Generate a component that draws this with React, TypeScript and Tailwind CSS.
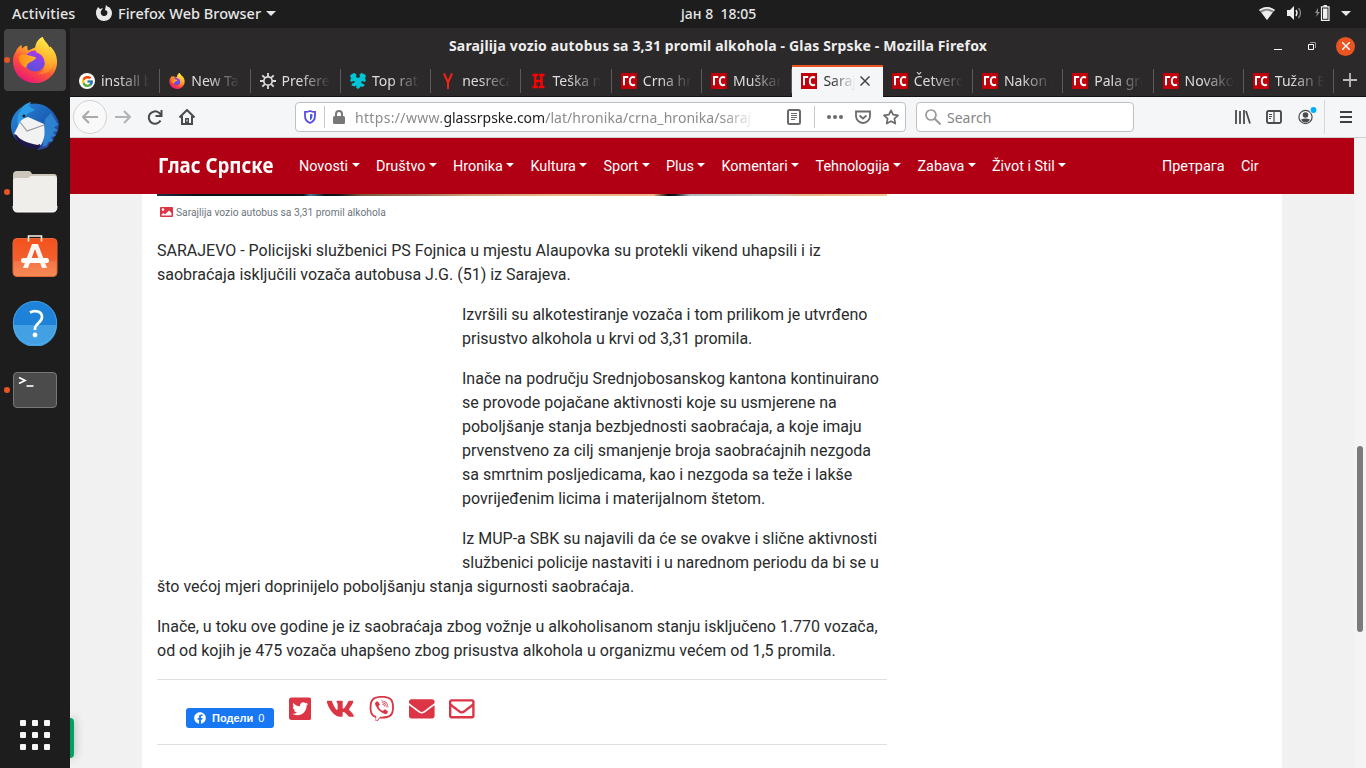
import React from "react";
import { FcGoogle } from "react-icons/fc";
import { FaTwitterSquare, FaVk, FaViber, FaEnvelope, FaRegEnvelope, FaFacebook } from "react-icons/fa";

const Firefox = ({ id, className }: { id: string; className: string }) => (
  <svg viewBox="0 0 48 48" className={className}>
    <defs>
      <linearGradient id={id + "a"} x1=".8" y1="0" x2=".25" y2="1">
        <stop offset="0" stopColor="#fff44f" />
        <stop offset=".35" stopColor="#ffb02e" />
        <stop offset=".62" stopColor="#ff5634" />
        <stop offset="1" stopColor="#e8117f" />
      </linearGradient>
      <linearGradient id={id + "b"} x1=".7" y1="0" x2=".3" y2="1">
        <stop offset="0" stopColor="#b833e1" />
        <stop offset=".5" stopColor="#7a48e8" />
        <stop offset="1" stopColor="#5b4fd8" />
      </linearGradient>
      <linearGradient id={id + "c"} x1="0" y1="0" x2="1" y2="0">
        <stop offset="0" stopColor="#ff8a16" />
        <stop offset="1" stopColor="#ffb52b" />
      </linearGradient>
      <linearGradient id={id + "d"} x1=".6" y1="0" x2=".4" y2="1">
        <stop offset="0" stopColor="#fff04a" />
        <stop offset=".6" stopColor="#ffb32c" />
        <stop offset="1" stopColor="#ff7a2c" />
      </linearGradient>
    </defs>
    <path d="M4 15c1-3 3-5 6-7 0 2 0 3 1 4 1-2 3-3 5-3 0 2 0 4 1 5l7-3c1-5 3-9 8-11 1 4 5 6 7 11l1-1c5 5 7 10 7 16 0 12-10 22-23 22S1 38 1 25c0-4 1-7 3-10z" fill={`url(#${id}a)`} />
    <circle cx="24" cy="25" r="11" fill={`url(#${id}b)`} />
    <path d="M7 20c3-2 7-2 10-1l8 2c0 2-3 4-6 5-2 1-4 3-4 6-5-2-8-6-8-12z" fill={`url(#${id}c)`} />
    <path d="M25 12c0-5 2-9 7-12 1 4 5 6 7 11l1-1c5 7 6 12 3 19-3 8-10 11-16 9 5-1 8-7 7-12s-3-8-9-10z" fill={`url(#${id}d)`} />
  </svg>
);

const Thunderbird = () => (
  <svg viewBox="0 0 48 48" className="h-12 w-12">
    <defs>
      <linearGradient id="tb" x1="0" y1="0" x2="1" y2="1">
        <stop offset="0" stopColor="#2b8bdc" />
        <stop offset=".5" stopColor="#1b62b8" />
        <stop offset="1" stopColor="#333a93" />
      </linearGradient>
    </defs>
    <path d="M14 3 20 0l-1 2C33-1 45 9 48 22l-1 6-2 5-2 2-1 4-4 3-1 3-5 2-6 1 4-4C13 45 2 40 0 26-1 15 6 7 14 3z" fill="url(#tb)" />
    <path d="M10 8c2-5 6-7 10-8l-2 4 6 4-8 4-2 6-6 8C5 20 6 12 10 8z" fill="#2c9ce6" />
    <path d="m34 17 6-6 7 12-4 2 4 4-5 1 3 4-5 1 2 4-5 1-1 3-4 2z" fill="#2e82cf" />
    <path d="M3 32 9 20c2-3 5-4 8-5l16 7c1 8 1 14-3 21L5 34z" fill="#f2f2f3" />
    <path d="m9 20 7 9 17-6" fill="none" stroke="#999" strokeWidth="1.100" />
    <circle cx="13" cy="14" r="1.600" fill="#222" />
    <path d="m3 32 26 10-2 5C15 46 6 43 3 32z" fill="#20164a" />
    <path d="m5 32 25 9-3 2C16 41 8 38 5 32z" fill="#f2f2f3" />
  </svg>
);

const Files = () => (
  <svg viewBox="0 0 46 42" className="h-[42px] w-[46px]">
    <path d="M1 4q0-4 4-4h12q2 0 3 3h22q3 0 3 4v15H1z" fill="#cdc7bb" />
    <path d="M1 10q0-3 3-3h12l3-2h23q3 0 3 3v28q0 5-4 5H5q-4 0-4-5z" fill="#f0eeea" />
    <path d="M1 35q0 6 4 6h36q4 0 4-6" fill="none" stroke="#fff" />
  </svg>
);

const Software = () => (
  <svg viewBox="0 0 46 44" className="h-[44px] w-[46px]">
    <defs>
      <linearGradient id="sw" x1="0" y1="0" x2="0" y2="1">
        <stop offset="0" stopColor="#f4511c" />
        <stop offset=".58" stopColor="#f2602d" />
        <stop offset=".6" stopColor="#f37445" />
        <stop offset="1" stopColor="#f58b55" />
      </linearGradient>
    </defs>
    <rect x="1" y="4.500" width="44" height="38" rx="4" fill="url(#sw)" stroke="#e5653a" />
    <path d="M16.500 7.500V2h13v5.500" fill="none" stroke="#fff3e5" strokeWidth="1.600" />
    <path d="M20 10h6l9 24h-5L23 15l-7 19h-5z" fill="#fff" opacity=".95" />
    <rect x="9" y="24" width="28" height="5" rx="2.500" fill="#fff" />
  </svg>
);

const Help = () => (
  <svg viewBox="0 0 46 46" className="h-[46px] w-[46px]">
    <circle cx="23" cy="23" r="22" fill="#1e82d8" />
    <path d="M1 25a22 22 0 0 0 44 0z" fill="#42a0e3" />
    <circle cx="23" cy="23" r="21.700" fill="none" stroke="#55b1ee" strokeWidth=".7" />
    <path d="M18 12.500c5-3 12-1 12 4.500 0 6-7 6-7 12v1" fill="none" stroke="#fff" strokeWidth="2.700" />
    <circle cx="23" cy="35" r="2.400" fill="#fff" />
  </svg>
);

const Terminal = () => (
  <svg viewBox="0 0 46 38" className="h-[38px] w-[46px]">
    <rect x="1.500" y="1.500" width="43" height="35" rx="3.500" fill="#4b4b4b" stroke="#777" />
    <path d="m7 6.500 6 3-6 3" fill="none" stroke="#fff" strokeWidth="1.700" />
    <path d="M14.500 15h7" stroke="#fff" strokeWidth="1.600" />
  </svg>
);

const Puzzle = () => (
  <svg viewBox="0 0 16 16" className="h-4 w-4">
    <path d="M0 2.500 2 1l2.500-1 2 1.500L6 4l2 1 2-1-.5-2.500 2-1.500L14 1l2 1.500-1 3 1 2-1.500 1.500-2-1-1.500 1 1 1.500 2 .5.5 2-3 1-1-1-.5 1.500L8 16l-2-1.500.5-1.500-1-.5-1 1-3-1 .5-2 2-.5 1-1.500L3.500 8l-2 1L0 7.500l1-2z" fill="#00c5d6" />
  </svg>
);

const Gear = () => (
  <svg viewBox="0 0 16 16" className="h-4 w-4">
    <circle cx="8" cy="8" r="4.200" fill="none" stroke="#dcdcdc" strokeWidth="1.700" />
    <path d="M8 0v3.500M8 12.500V16M0 8h3.500M12.500 8H16M2.300 2.300l2.600 2.600M11.100 11.100l2.600 2.600M13.700 2.300l-2.600 2.600M4.900 11.100l-2.600 2.600" stroke="#dcdcdc" strokeWidth="1.800" />
  </svg>
);

const Gs = () => (
  <span className="flex h-4 w-4 items-center justify-center bg-[#c2000b]">
    <svg viewBox="0 0 16 16" className="h-4 w-4">
      <path d="M3 12.300V4h4.200M14 4.600c-3-1.500-5.200.2-5.200 3.500s2 5 5.200 3.600" fill="none" stroke="#fff" strokeWidth="2" />
    </svg>
  </span>
);

const tabs: { title: string; icon: React.ReactNode; active?: boolean }[] = [
  { title: "install b", icon: <span className="flex h-4 w-4 items-center justify-center rounded-full bg-white"><FcGoogle size={13} /></span> },
  { title: "New Ta", icon: <Firefox id="ft" className="h-4 w-4" /> },
  { title: "Prefere", icon: <Gear /> },
  { title: "Top rat", icon: <Puzzle /> },
  { title: "nesreca", icon: <svg viewBox="0 0 16 16" className="h-4 w-4"><path d="m4 .5 4 9 4-9M8 9v7" fill="none" stroke="#f62217" strokeWidth="2" /></svg> },
  { title: "Teška n", icon: <svg viewBox="0 0 16 16" className="h-4 w-4"><path d="M2.500 2H8M9 2h5.500M2.500 14H8M9 14h5.500M5.200 2v12M11.500 2v12M5 8h6" fill="none" stroke="#f00" strokeWidth="2.500" /></svg> },
  { title: "Crna hr", icon: <Gs /> },
  { title: "Muškar", icon: <Gs /> },
  { title: "Saraj", icon: <Gs />, active: true },
  { title: "Četverc", icon: <Gs /> },
  { title: "Nakon a", icon: <Gs /> },
  { title: "Pala gru", icon: <Gs /> },
  { title: "Novako", icon: <Gs /> },
  { title: "Tužan B", icon: <Gs /> },
];

const Tab = ({ title, icon, active }: { title: string; icon: React.ReactNode; active?: boolean }) => (
  <div className={active ? "flex h-[32px] w-[90.300px] items-center border-t-2 border-[#e95420] bg-[#f5f6f7] pl-[9px] text-[#333]" : "flex h-[32px] w-[90.300px] items-center pl-[9px] text-[#ddd]"}>
    <span className={active ? "-mt-[2px]" : ""}>{icon}</span>
    <span className={active ? "-mt-[3px] ml-[6px] w-[34px] whitespace-nowrap [mask-image:linear-gradient(to_right,black_25%,transparent_95%)]" : "-mt-[2px] ml-[6px] w-[50px] whitespace-nowrap [mask-image:linear-gradient(to_right,black_35%,transparent_98%)]"}>{title}</span>
    {active ? (
      <svg viewBox="0 0 10 10" className="-mt-[2px] ml-[3px] h-[10px] w-[10px] shrink-0"><path d="m.5.500 9 9m0-9-9 9" stroke="#444" strokeWidth="1.500" /></svg>
    ) : (
      <span className="ml-auto h-6 w-px bg-[#5b5959]" />
    )}
  </div>
);

const nav = [
  ["Novosti", "w-[77px]"],
  ["Društvo", "w-[77px]"],
  ["Hronika", "w-[77.500px]"],
  ["Kultura", "w-[73px]"],
  ["Sport", "w-[62.500px]"],
  ["Plus", "w-[55.500px]"],
  ["Komentari", "w-[94px]"],
  ["Tehnologija", "w-[102px]"],
  ["Zabava", "w-[74.500px]"],
  ["Život i Stil", "w-[80px]"],
];

const TopBar = () => (
  <header className="flex h-7 shrink-0 items-center bg-[#1d1d1d] text-[14px] font-medium text-[#e6e6e6]">
    <span className="-mt-[1px] ml-3 w-[84px] text-[14.400px] tracking-[0.150px]">Activities</span>
    <svg viewBox="0 0 16 16" className="-mt-[2px] h-4 w-4">
      <path d="M1 4l1-2 2 2 3-1-2 3C4 9 6 11 8.500 11S12 8 11 6L9 5l1-5 2 2 1 0c2 2 3 4 3 6 0 5-4 8-8 8s-8-3-8-8c0-1 0-3 1-4z" fill="#e8e8e8" />
    </svg>
    <span className="-mt-[1px] ml-[6px] w-[144px] whitespace-nowrap text-[14.500px] tracking-[0.020px]">Firefox Web Browser</span>
    <svg viewBox="0 0 10 5" className="-mt-[2px] ml-[4px] h-[5px] w-[10px]"><path d="M0 0h10L5 5z" fill="#e6e6e6" /></svg>
    <span className="-mt-[2px] ml-[405px] w-[90px] whitespace-pre">јан 8  18:05</span>
    <span className="ml-auto flex items-center pb-[2px] pr-[15px]">
      <svg viewBox="0 0 16 13" className="h-[13px] w-4"><path d="M0 3c5-4 11-4 16 0l-8 10z" fill="#888" /><path d="M0 3c5-4 11-4 16 0l-1 1C10 1 6 1 1 4zM2.500 5.500c4-2.500 7-2.500 11 0L8 13z" fill="#eee" /></svg>
      <svg viewBox="0 0 16 14" className="ml-[12px] h-[14px] w-4"><path d="M0 4h3l4-4v14l-4-4H0z" fill="#eee" /><path d="M9 4q2 3 0 6" fill="none" stroke="#eee" strokeWidth="1.400" /><path d="M11.500 2q4 5 0 10" fill="none" stroke="#888" strokeWidth="1.300" /></svg>
      <svg viewBox="0 0 16 16" className="ml-[11px] h-4 w-4"><path d="M4 3 1 8h2l-1 4 4-5H4z" fill="#888" /><path d="M7.500 1.800h7.500v13.500H7.500zM9.500.7h3.500" fill="none" stroke="#eee" strokeWidth="1.200" /><path d="M9 3.500h4.500v10.300H9z" fill="#eee" /></svg>
      <svg viewBox="0 0 10 5" className="ml-[11px] h-[5px] w-[10px]"><path d="M0 0h10L5 5z" fill="#e6e6e6" /></svg>
    </span>
  </header>
);

const Dot = () => <span className="absolute left-[4px] top-1/2 h-[6px] w-[6px] -translate-y-1/2 rounded-full bg-[#e95420]" />;

const Dock = () => (
  <aside className="flex w-[70px] shrink-0 flex-col items-center bg-[#1d1d1d]">
    <div className="relative flex h-[64px] w-full items-center justify-center">
      <div className="flex h-[62px] w-[62px] items-center justify-center rounded-[4px] bg-[#464646]"><Firefox id="fd" className="h-[46px] w-[46px]" /></div>
      <Dot />
    </div>
    <div className="mt-[1px] flex h-[66px] w-full items-center justify-center"><Thunderbird /></div>
    <div className="relative flex h-[66px] w-full items-center justify-center"><Files /><Dot /></div>
    <div className="flex h-[66px] w-full items-center justify-center pb-1"><Software /></div>
    <div className="flex h-[66px] w-full items-center justify-center pb-[2px]"><Help /></div>
    <div className="relative flex h-[66px] w-full items-center justify-center"><Terminal /><Dot /></div>
    <div className="mb-[18px] mt-auto grid grid-cols-3 gap-[6px]">
      {Array.from({ length: 9 }, (_, i) => <span key={i} className="h-[6px] w-[6px] rounded-[1px] bg-[#f6f6f6]" />)}
    </div>
  </aside>
);

const Toolbar = () => (
  <div className="flex h-[41px] shrink-0 items-center border-b border-[#cfd0d2] bg-[#f5f6f7] text-[14px]">
    <span className="ml-[3px] flex h-[34px] w-[34px] items-center justify-center rounded-full border border-[#d2d2d4] bg-[#f9f9fa]">
      <svg viewBox="0 0 16 14" className="h-[14px] w-4"><path d="M16 7H1M7 1 1 7l6 6" fill="none" stroke="#aaa" strokeWidth="2" /></svg>
    </span>
    <svg viewBox="0 0 16 14" className="ml-[8px] h-[14px] w-4"><path d="M0 7h15M9 1l6 6-6 6" fill="none" stroke="#b3b3b5" strokeWidth="2" /></svg>
    <svg viewBox="0 0 16 16" className="ml-[16px] h-4 w-4"><path d="M13.500 11.500A6.200 6.200 0 1 1 12 3.800l2 2M14.500 1v6h-6" fill="none" stroke="#4b4b4b" strokeWidth="2" /></svg>
    <svg viewBox="0 0 16 16" className="ml-[16px] h-4 w-4"><path d="M.500 8.500 8 1l7.500 7.500M3 7v8h10V7" fill="none" stroke="#4b4b4b" strokeWidth="2" /><path d="M6 9h4v6H6z" fill="#4b4b4b" /><path d="M8 10.500v2" stroke="#fff" /></svg>
    <div className="ml-[100px] flex h-[30px] w-[611px] items-center rounded-[4px] border border-[#bfc0c3] bg-white">
      <svg viewBox="0 0 12 14" className="ml-[8px] h-[14px] w-3"><path d="M1 2q3 0 5-1 2 1 5 1v4q0 5-5 7-5-2-5-7z" fill="none" stroke="#5a4be2" strokeWidth="1.800" /><path d="M6 4v6.500Q8.500 9 8.500 5V4.300z" fill="#3e60e0" /></svg>
      <span className="ml-[8px] h-[22px] w-px bg-[#c8c8ca]" />
      <svg viewBox="0 0 12 14" className="ml-[8px] h-[14px] w-3"><rect y="6" width="12" height="8" rx="1.500" fill="#777" /><path d="M3 7V4a3 3 0 0 1 6 0v3" fill="none" stroke="#777" strokeWidth="2" /></svg>
      <span className="ml-[10px] w-[400px] whitespace-nowrap text-[#8c8c8c] tracking-[0.050px] [mask-image:linear-gradient(to_right,black_92%,transparent)]"><span className="tracking-[0.330px]">https://www.</span><span className="tracking-[-0.020px] text-[#1b1b1b]">glassrpske.com</span>/lat/hronika/crna_hronika/saraj</span>
      <svg viewBox="0 0 14 16" className="ml-[32px] h-4 w-[14px]"><rect x="1" y="1" width="12" height="14" rx="1.500" fill="none" stroke="#6a6a6b" strokeWidth="2" /><path d="M4 4.500h6M4 6.500h6M4 8.500h6M4 10.500h4" stroke="#6a6a6b" /></svg>
      <span className="ml-[13px] h-[22px] w-px bg-[#c8c8ca]" />
      <svg viewBox="0 0 16 4" className="ml-[12px] h-1 w-4"><circle cx="2" cy="2" r="2" fill="#6a6a6b" /><circle cx="8" cy="2" r="2" fill="#6a6a6b" /><circle cx="14" cy="2" r="2" fill="#6a6a6b" /></svg>
      <svg viewBox="0 0 16 14" className="ml-[12px] h-[14px] w-4"><path d="M1 1.500h14V6A7 7 0 0 1 1 6z" fill="none" stroke="#6a6a6b" strokeWidth="1.800" /><path d="m4.500 5.500 3.500 3 3.500-3" fill="none" stroke="#6a6a6b" strokeWidth="1.800" /></svg>
      <svg viewBox="0 0 16 16" className="ml-[12px] h-4 w-4"><path d="m8 1.300 2.100 4.400 4.900.6-3.600 3.400.9 4.900L8 12.200l-4.300 2.400.9-4.900L1 6.300l4.900-.6z" fill="none" stroke="#6a6a6b" strokeWidth="1.700" strokeLinejoin="round" /></svg>
    </div>
    <div className="ml-[10px] flex h-[30px] w-[218px] items-center rounded-[4px] border border-[#bfc0c3] bg-white">
      <svg viewBox="0 0 16 16" className="ml-[8px] h-4 w-4"><circle cx="6" cy="6" r="5" fill="none" stroke="#999" strokeWidth="1.700" /><path d="m9.500 9.500 6 6" stroke="#999" strokeWidth="2" /></svg>
      <span className="ml-[6px] text-[#858585]">Search</span>
    </div>
    <svg viewBox="0 0 16 14" className="ml-[100.500px] h-[14px] w-4"><path d="M1 0v14M5 1v13M9 0v14M11 1l4 12.500" fill="none" stroke="#4b4b4b" strokeWidth="1.800" /></svg>
    <svg viewBox="0 0 16 14" className="ml-[15.500px] h-[14px] w-4"><rect x="1" y="1" width="14" height="12" rx="1.500" fill="none" stroke="#4b4b4b" strokeWidth="1.900" /><path d="M8 1v12M3 4.500h3M3 6.500h3M3 8.500h2" stroke="#4b4b4b" strokeWidth="1.200" /></svg>
    <svg viewBox="0 0 20 20" className="-mt-[2px] ml-[15px] h-5 w-5"><circle cx="8.500" cy="11" r="6.600" fill="none" stroke="#4b4b4b" strokeWidth="1.200" /><circle cx="8.500" cy="9" r="2.800" fill="#4b4b4b" /><path d="M4 13.500q4.500-2 9 0-1.500 3-4.500 3T4 13.500z" fill="#4b4b4b" /><circle cx="16.500" cy="4" r="3.800" fill="#f5f6f7" /><circle cx="16.500" cy="4" r="2.900" fill="#00aeff" /></svg>
    <span className="ml-[7px] h-[34px] w-px bg-[#d7d7db]" />
    <svg viewBox="0 0 12 12" className="ml-[15px] h-3 w-3"><path d="M0 1h12M0 6h12M0 11h12" stroke="#3f3f3f" strokeWidth="2" /></svg>
  </div>
);

const Article = () => (
  <main className="ml-[72px] h-full w-[1140px] bg-white pl-[15px] text-[16px] leading-6 text-[#292b2c]">
    <div className="w-[730px]">
      <div className="h-[2px] bg-[linear-gradient(to_right,#1c3144_0,#07121c_5%,#08131d_20%,#487894_21%,#07111d_23%,#161619_25%,#78583f_28%,#9e795b_36%,#c99f77_43%,#e9b787_55%,#efb386_68%,#090909_70%,#161a20_71%,#aeb5b8_73%,#c9c4bd_84%,#e5b684_89%,#f0c594_100%)]" />
      <div className="mb-4 flex h-[27px] items-center pl-[3px] pt-[7px] text-[#6c757d]">
        <svg viewBox="0 0 13 11" className="-mt-[2px] h-[11px] w-[13px]"><path fillRule="evenodd" d="M1 0h11q1 0 1 1v8q0 1-1 1H1q-1 0-1-1V1q0-1 1-1zm2 1.300a1.300 1.300 0 1 0 0 2.600 1.300 1.300 0 1 0 0-2.600M1.500 8.500h10V6L9 3.500l-4 4L3.500 6l-2 1.500z" fill="#dc3545" /></svg>
        <span className="ml-[3px] whitespace-nowrap text-[10.240px] leading-4">Sarajlija vozio autobus sa 3,31 promil alkohola</span>
      </div>
      <p className="mb-4 whitespace-nowrap">SARAJEVO - Policijski službenici PS Fojnica u mjestu Alaupovka su protekli vikend uhapsili i iz<br />saobraćaja isključili vozača autobusa J.G. (51) iz Sarajeva.</p>
      <div className="float-left h-[268px] w-[305px]" />
      <p className="mb-4 whitespace-nowrap">Izvršili su alkotestiranje vozača i tom prilikom je utvrđeno<br />prisustvo alkohola u krvi od 3,31 promila.</p>
      <p className="mb-4 whitespace-nowrap">Inače na području Srednjobosanskog kantona kontinuirano<br />se provode pojačane aktivnosti koje su usmjerene na<br />poboljšanje stanja bezbjednosti saobraćaja, a koje imaju<br />prvenstveno za cilj smanjenje broja saobraćajnih nezgoda<br />sa smrtnim posljedicama, kao i nezgoda sa teže i lakše<br />povrijeđenim licima i materijalnom štetom.</p>
      <p className="mb-4 whitespace-nowrap">Iz MUP-a SBK su najavili da će se ovakve i slične aktivnosti<br />službenici policije nastaviti i u narednom periodu da bi se u<br />što većoj mjeri doprinijelo poboljšanju stanja sigurnosti saobraćaja.</p>
      <p className="whitespace-nowrap">Inače, u toku ove godine je iz saobraćaja zbog vožnje u alkoholisanom stanju isključeno 1.770 vozača,<br />od od kojih je 475 vozača uhapšeno zbog prisustva alkohola u organizmu većem od 1,5 promila.</p>
      <div className="mt-[16px] flex h-[66px] items-start border-y border-[#dfdfdf] pl-[29px] text-[#dc3545]">
        <span className="mr-[15px] mt-[28px] flex h-5 w-[88px] items-center rounded-[3px] bg-[#1877f2] pl-2 font-['Liberation_Sans'] text-[11px] font-bold text-white">
          <FaFacebook size={12} />
          <span className="ml-[6px]">Подели</span><span className="ml-[5px] font-normal">0</span>
        </span>
        <span className="flex items-center gap-[14.400px] pt-[15.500px]">
          <FaTwitterSquare className="h-[25.600px] w-[22.400px]" />
          <FaVk className="h-[25.600px] w-[28.800px]" />
          <FaViber className="h-[25.600px] w-[25.600px]" />
          <FaEnvelope className="h-[25.600px] w-[25.600px]" />
          <FaRegEnvelope className="h-[25.600px] w-[25.600px]" />
        </span>
      </div>
    </div>
  </main>
);

export default function App() {
  return (
    <div className="flex h-screen w-screen flex-col overflow-hidden font-['Noto_Sans',sans-serif]">
      <TopBar />
      <div className="flex min-h-0 flex-1">
        <Dock />
        <div className="flex w-[1296px] flex-col">
          <div className="flex h-[37px] shrink-0 items-center bg-[#2c292a] text-white">
            <span className="-mt-[2px] ml-[379px] w-[542px] whitespace-nowrap text-[14px] font-bold tracking-[0.155px] text-[#eee]">Sarajlija vozio autobus sa 3,31 promil alkohola - Glas Srpske - Mozilla Firefox</span>
            <svg viewBox="0 0 8 8" className="ml-auto h-2 w-2"><path d="M0 6.500h8" stroke="#fff" /></svg>
            <svg viewBox="0 0 8 8" className="-mt-[2px] ml-[26px] h-2 w-2"><path d="M.5 2.500h5v5h-5z" fill="none" stroke="#fff" /><path d="M2 .5h5.500V6" fill="none" stroke="#999" /></svg>
            <span className="-mt-[1px] ml-[20px] mr-[11px] flex h-[19px] w-[19px] items-center justify-center rounded-full bg-[#e95420]"><svg viewBox="0 0 8 8" className="h-2 w-2"><path d="m0 0 8 8m0-8-8 8" stroke="#fff" strokeWidth="1.400" /></svg></span>
          </div>
          <div className="flex h-[32px] shrink-0 bg-[#2c292a] text-[14px] shadow-[inset_0_-1px_#111]">
            {tabs.map((t) => <Tab key={t.title} {...t} />)}
            <span className="flex flex-1 items-center justify-center"><svg viewBox="0 0 14 14" className="-mt-[2px] h-[14px] w-[14px]"><path d="M7 0v14M0 7h14" stroke="#bbb" strokeWidth="1.800" /></svg></span>
          </div>
          <Toolbar />
          <div className="flex min-h-0 flex-1 bg-[#f1f1f1] font-[Roboto,sans-serif]">
            <div className="flex w-[1284px] flex-col">
              <nav className="flex h-[56px] shrink-0 items-center bg-[#b10013] pl-[88px] pt-[1px] text-[14.400px] text-white">
                <div className="-mt-[2px] w-[141px]"><span className="inline-block origin-left scale-x-[0.850] whitespace-nowrap font-['Noto_Sans'] text-[22px] font-bold leading-6">Глас Српске</span></div>
                {nav.map(([label, width]) => (
                  <span key={label} className={"flex shrink-0 items-center whitespace-nowrap " + width}>{label}<svg viewBox="0 0 8 4" className="-mt-[2px] ml-[3.500px] h-1 w-2"><path d="M0 0h8L4 4z" fill="white" /></svg></span>
                ))}
                <span className="ml-auto w-[79px]">Претрага</span>
                <span className="w-[113px]">Cir</span>
              </nav>
              <div className="relative min-h-0 flex-1 overflow-hidden">
                <Article />
                <span className="absolute bottom-[10px] left-0 h-10 w-1 rounded-r-[4px] bg-[#00a063] shadow-[0_0_10px_rgba(0,0,0,0.4)]" />
              </div>
            </div>
            <div className="w-3 bg-[#f4f4f4] pl-[3px] pt-[308px]"><div className="h-[186px] w-[6px] rounded-[3px] bg-[#7b7b7c]" /></div>
          </div>
        </div>
      </div>
    </div>
  );
}
